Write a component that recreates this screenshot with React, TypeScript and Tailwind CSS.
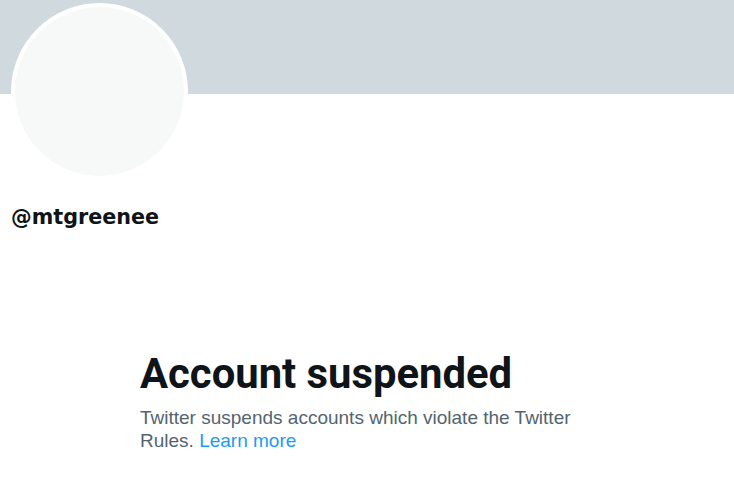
export default function App() {
  return (
    <div className="min-h-screen bg-white" style={{ fontFamily: '"Liberation Sans", Arial, sans-serif' }}>
      {/* Banner */}
      <div className="h-[94px] bg-[#CFD9DE]" />

      {/* Avatar + handle */}
      <div className="px-[11px]">
        <div className="-mt-[91px] w-[177px] h-[177px] rounded-full border-[4.5px] border-white bg-[#F7F9F9]" />
        <div
          className="mt-[25px] text-[20.7px] leading-[24px] font-bold text-[#0F1419]"
          style={{ fontFamily: '"DejaVu Sans", sans-serif' }}
        >
          @mtgreenee
        </div>
      </div>

      {/* Suspended notice */}
      <div className="mt-[121px] pl-[140px]">
        <div className="w-[450px]">
          <h1
            className="text-[41.8px] leading-[48px] font-bold text-[#0F1419]"
            style={{ fontFamily: 'Roboto, sans-serif' }}
          >
            Account suspended
          </h1>
          <p className="mt-[8px] text-[19px] leading-[23px] text-[#536471]">
            Twitter suspends accounts which violate the Twitter Rules.{' '}
            <a href="#" className="text-[#1D9BF0]">
              Learn more
            </a>
          </p>
        </div>
      </div>
    </div>
  );
}
